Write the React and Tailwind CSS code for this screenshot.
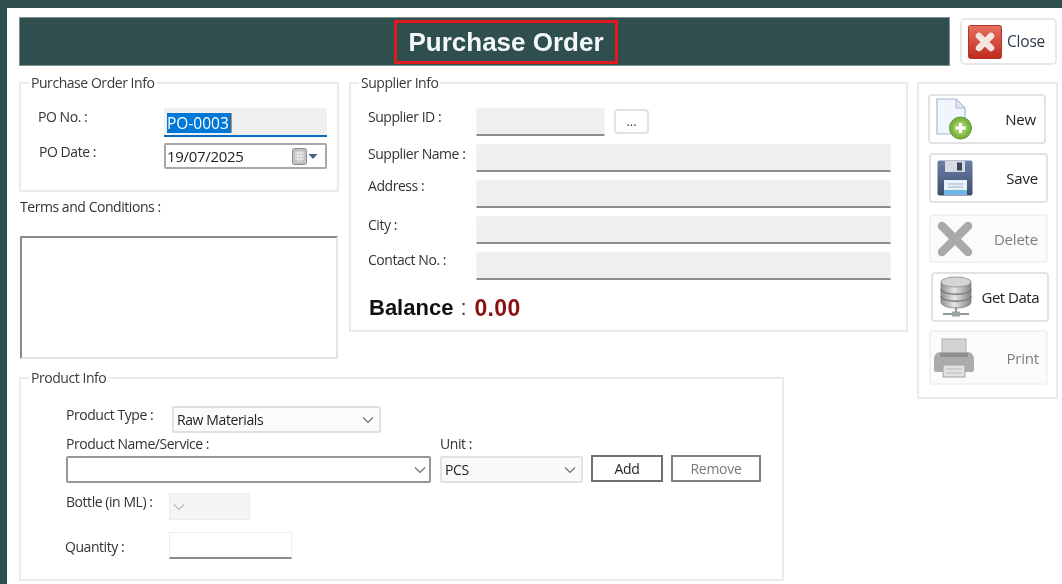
const sans = { fontFamily: '"Open Sans", "Noto Sans", sans-serif' };

function Box({ title, className = "", children }) {
  return (
    <div className={"relative border-2 border-[#ebebeb] " + className}>
      <span className="absolute left-[8px] top-[-11px] bg-white px-[2px] text-[14px] leading-[20px] tracking-[-0.45px] text-[#3a3a3a] whitespace-nowrap">{title}</span>
      {children}
    </div>
  );
}

function Label({ className = "", children }) {
  return <span className={"text-[14px] leading-[20px] tracking-[-0.45px] text-[#333] whitespace-nowrap " + className}>{children}</span>;
}

function Chevron({ className = "", color = "#6a6a6a" }) {
  return (
    <svg viewBox="0 0 12 8" className={"w-[12px] h-[8px] " + className} fill="none" stroke={color} strokeWidth="1.1">
      <path d="M1 1.5 L6 6.5 L11 1.5" />
    </svg>
  );
}

function Field({ className = "" }) {
  return <div className={"h-full bg-[#efefef] border-t border-x border-[#f4f4f4] border-b-2 border-b-[#8c8c8c] rounded-[1px] " + className} />;
}

function SupplierRow({ label, labelClass = "", className = "", children }) {
  return (
    <div className={"flex h-[28px] " + className}>
      <Label className={"w-[108px] shrink-0 " + labelClass}>{label}</Label>
      {children || <Field className="w-[415px]" />}
    </div>
  );
}

function CloseIcon() {
  return (
    <svg viewBox="0 0 34 34" className="w-[34px] h-[34px]">
      <defs>
        <linearGradient id="rd" x1="0" y1="0" x2="0" y2="1">
          <stop offset="0" stopColor="#e8705f" />
          <stop offset="1" stopColor="#bf2a20" />
        </linearGradient>
      </defs>
      <rect x="0.5" y="0.5" width="33" height="33" rx="2" fill="url(#rd)" stroke="#b5342a" />
      <path d="M11 11 L23 23 M23 11 L11 23" stroke="#f6e4e2" strokeWidth="6.5" strokeLinecap="round" />
    </svg>
  );
}

function NewIcon() {
  return (
    <svg viewBox="0 0 36 42" className="w-[36px] h-[42px]">
      <path d="M1 1 H20 L29 10 V36 H1 Z" fill="#f1f5fc" stroke="#a9b6d6" strokeWidth="1.2" />
      <path d="M20 1 V10 H29 Z" fill="#dfe6f4" stroke="#a9b6d6" strokeWidth="1" />
      <circle cx="24.5" cy="30" r="11" fill="#7cb342" stroke="#5f9a30" />
      <circle cx="24.5" cy="30" r="7.5" fill="#94c95a" />
      <path d="M24.5 25 V35 M19.5 30 H29.5" stroke="#ffffff" strokeWidth="3.4" />
    </svg>
  );
}

function SaveIcon() {
  return (
    <svg viewBox="0 0 36 36" className="w-[36px] h-[36px]">
      <defs>
        <linearGradient id="fl" x1="0" y1="0" x2="0" y2="1">
          <stop offset="0" stopColor="#6d7fa6" />
          <stop offset="1" stopColor="#3d4c70" />
        </linearGradient>
      </defs>
      <rect x="0.5" y="0.5" width="35" height="35" rx="2" fill="url(#fl)" />
      <rect x="8" y="1" width="20" height="11" fill="#d8dbe2" />
      <rect x="20" y="2.5" width="5" height="8" fill="#3b4560" />
      <rect x="7" y="20" width="23" height="15" fill="#e8f2fa" />
      <rect x="7" y="30" width="23" height="5" fill="#6fb7e3" />
      <path d="M11 24 H26 M11 27 H26" stroke="#a7b3c6" strokeWidth="1" />
    </svg>
  );
}

function DeleteIcon() {
  return (
    <svg viewBox="0 0 36 36" className="w-[36px] h-[36px]">
      <path d="M5 5 L31 31 M31 5 L5 31" stroke="#a9a9a9" strokeWidth="8.5" strokeLinecap="round" />
    </svg>
  );
}

function DataIcon() {
  return (
    <svg viewBox="0 0 34 42" className="w-[34px] h-[42px]">
      <defs>
        <linearGradient id="db" x1="0" y1="0" x2="1" y2="0">
          <stop offset="0" stopColor="#8f8f8f" />
          <stop offset="0.45" stopColor="#e6e6e6" />
          <stop offset="1" stopColor="#848484" />
        </linearGradient>
      </defs>
      <path d="M2 6 V26 C2 34 32 34 32 26 V6 Z" fill="url(#db)" stroke="#808080" strokeWidth="0.8" />
      <ellipse cx="17" cy="6" rx="15" ry="5" fill="#d5d5d5" stroke="#8a8a8a" strokeWidth="0.8" />
      <path d="M2 13 C2 20 32 20 32 13 M2 20 C2 27 32 27 32 20" fill="none" stroke="#7a7a7a" strokeWidth="1.4" />
      <path d="M17 31 V37 M4 38 H30" stroke="#8d9a9a" strokeWidth="2.2" />
      <rect x="13" y="35.5" width="8" height="5" fill="#9aa5a5" />
    </svg>
  );
}

function PrintIcon() {
  return (
    <svg viewBox="0 0 42 40" className="w-[42px] h-[40px]">
      <rect x="9" y="1" width="24" height="18" fill="#d2d2d2" stroke="#b0b0b0" />
      <path d="M1 22 Q1 14 8 14 H34 Q41 14 41 22 V32 Q41 34 38 34 H4 Q1 34 1 32 Z" fill="#ababab" />
      <rect x="7" y="15" width="28" height="4" fill="#8f8f8f" />
      <rect x="10" y="27" width="22" height="12" fill="#e2e2e2" stroke="#a0a0a0" />
      <path d="M13 31 H29 M13 35 H29" stroke="#bdbdbd" strokeWidth="1" />
    </svg>
  );
}

function ToolButton({ icon, label, className = "", textClass = "", disabled = false }) {
  return (
    <div className={"flex items-center justify-between rounded-[4px] border-2 " + (disabled ? "border-[#f2f2f2] bg-[#fbfbfb] " : "border-[#e2e2e2] bg-white ") + className}>
      {icon}
      <span className={"text-[15px] leading-[20px] tracking-[-0.2px] whitespace-nowrap " + (disabled ? "text-[#7d7d7d] " : "text-[#222] ") + textClass}>{label}</span>
    </div>
  );
}

export default function App() {
  return (
    <div className="w-[1062px] h-[584px] overflow-hidden bg-[#2f4f4f] pt-2 pl-[7px] blur-[0.5px]" style={sans}>
      <div className="h-full bg-white pl-3 pt-[9px]">
        {/* Header */}
        <div className="flex items-start">
          <div className="w-[931px] h-[49px] bg-[#2f4f4f] border border-[#7f9090]">
            <div className="mt-[2px] ml-[374px] h-[44px] w-[224px] border-[3px] border-[#e01b1f] flex items-center justify-center text-[26px] font-bold text-[#f4f8f8]" style={{ fontFamily: '"Liberation Sans", sans-serif' }}>
              Purchase Order
            </div>
          </div>
          <div className="ml-[10px] mt-[1px] w-[97px] h-[47px] rounded-[5px] border-2 border-[#e8e8e8] flex items-center pl-[6px] gap-[5px]">
            <CloseIcon />
            <span className="text-[15.5px] tracking-[-0.2px] text-[#2d3b4a]">Close</span>
          </div>
        </div>

        {/* Body */}
        <div className="flex items-start mt-4">
          <div className="w-[889px] shrink-0">
            <div className="flex items-start gap-[10px]">
              <div className="w-[320px] shrink-0">
                <Box title="Purchase Order Info" className="h-[110px] pt-6 pl-[17px]">
                  <div className="flex h-[29px]">
                    <Label className="w-[126px] shrink-0 mt-[-1px]">PO No. :</Label>
                    <div className="w-[163px] h-full bg-[#f0f0f0] border-b-2 border-b-[#0a6ac0] pl-[3px] pt-[5px]">
                      <span className="block w-[65px] h-[20px] bg-[#0078d7] border-r border-r-[#e8893a] text-[15.5px] leading-[20px] text-white">PO-0003</span>
                    </div>
                  </div>
                  <div className="flex h-[26px] mt-[6px]">
                    <Label className="w-[125px] shrink-0 ml-[1px] mt-[-1px]">PO Date :</Label>
                    <div className="w-[163px] h-full border-2 border-[#a8a8a8] rounded-[2px] flex items-center pl-[1px] pr-[7px]">
                      <span className="text-[15px] tracking-[-0.3px] text-[#222] flex-1">19/07/2025</span>
                      <svg viewBox="0 0 26 17" className="w-[26px] h-[17px]">
                        <rect x="0.5" y="0.5" width="14" height="16" rx="2" fill="#bfc2c7" stroke="#8e8e8e" />
                        <path d="M3 5 H12 M3 8 H12 M3 11 H12 M6 3 V14 M9 3 V14" stroke="#f4f4f4" strokeWidth="1" />
                        <path d="M16.5 6 H25.5 L21 11 Z" fill="#4a6287" />
                      </svg>
                    </div>
                  </div>
                </Box>
                <div className="mt-[5px] h-[20px]">
                  <Label className="block ml-[1px]">Terms and Conditions :</Label>
                </div>
                <div className="mt-[19px] ml-[1px] w-[318px] h-[123px] border-2 border-t-[#8b8b8b] border-l-[#8b8b8b] border-r-[#e4e4e4] border-b-[#e4e4e4] bg-white" />
              </div>

              <Box title="Supplier Info" className="w-[559px] h-[250px] pt-6 pl-[17px]">
                <SupplierRow label="Supplier ID :" labelClass="mt-[-1px]">
                  <Field className="w-[129px]" />
                  <div className="ml-[9px] mt-[1px] w-[35px] h-[25px] rounded-[4px] border-2 border-[#e2e2e2] bg-white text-[13px] leading-[21px] text-center text-[#444]">...</div>
                </SupplierRow>
                <SupplierRow label="Supplier Name :" className="mt-[8px]" />
                <SupplierRow label="Address :" className="mt-[8px]" labelClass="mt-[-4px]" />
                <SupplierRow label="City :" className="mt-[8px]" labelClass="mt-[-1px]" />
                <SupplierRow label="Contact No. :" className="mt-[8px]" labelClass="mt-[-2px]" />
                <div className="mt-[15px] ml-[1px] flex items-center text-[22px] leading-[26px]" style={{ fontFamily: '"Liberation Sans", sans-serif' }}>
                  <span className="font-bold text-[#111]">Balance</span>
                  <span className="ml-[7px] text-[#444]">:</span>
                  <span className="ml-[8px] font-bold text-[#8b1010] text-[23px] tracking-[0.3px]">0.00</span>
                </div>
              </Box>
            </div>

            {/* Product Info */}
            <Box title="Product Info" className="mt-[18px] w-[765px] h-[204px] pl-[45px] pt-[27px]">
              <div className="flex h-[27px]">
                <Label className="w-[106px] shrink-0 mt-[-1px]">Product Type :</Label>
                <div className="w-[209px] h-full bg-[#fbfbfb] border-2 border-[#e0e0e0] rounded-[2px] flex items-center justify-between pl-[3px] pr-[5px]">
                  <span className="text-[14px] tracking-[-0.4px] text-[#222]">Raw Materials</span>
                  <Chevron />
                </div>
              </div>
              <div className="flex h-[20px] mt-[1px]">
                <Label className="w-[374px] shrink-0">Product Name/Service :</Label>
                <Label>Unit :</Label>
              </div>
              <div className="flex items-start mt-[2px] h-[28px]">
                <div className="w-[365px] h-[27px] border-2 border-[#969696] rounded-[2px] flex items-center justify-end pr-[3px]">
                  <Chevron />
                </div>
                <div className="ml-[9px] w-[143px] h-[27px] bg-[#fafafa] border-2 border-[#e2e2e2] rounded-[2px] flex items-center justify-between pl-[3px] pr-[5px]">
                  <span className="text-[14px] tracking-[-0.4px] text-[#222]">PCS</span>
                  <Chevron />
                </div>
                <div className="ml-[8px] mt-[-1px] w-[72px] h-[27px] border-2 border-[#707070] flex items-center justify-center text-[14px] tracking-[-0.4px] text-[#222]">Add</div>
                <div className="ml-[8px] mt-[-1px] w-[90px] h-[27px] border-2 border-[#808080] flex items-center justify-center text-[14px] tracking-[-0.3px] text-[#7a7a7a]">Remove</div>
              </div>
              <div className="flex h-[27px] mt-[9px]">
                <Label className="w-[103px] shrink-0 mt-[-1px]">Bottle (in ML) :</Label>
                <div className="w-[81px] h-full bg-[#f5f5f5] border border-[#ececec] flex items-center pl-[3px]">
                  <Chevron color="#b5b5b5" />
                </div>
              </div>
              <div className="flex h-[27px] mt-[12px]">
                <Label className="w-[103px] shrink-0 ml-[-1px] mr-[1px] mt-[5px]">Quantity :</Label>
                <div className="w-[123px] h-full bg-white border-t border-x border-[#eeeeee] border-b-2 border-b-[#8c8c8c]" />
              </div>
            </Box>
          </div>

          {/* Right toolbar */}
          <div className="ml-[9px] w-[141px] h-[317px] border-2 border-[#ebebeb] pl-[9px] pt-[10px]">
            <ToolButton icon={<NewIcon />} label="New" className="w-[118px] h-[50px] pl-[6px] pr-[8px]" />
            <ToolButton icon={<SaveIcon />} label="Save" className="ml-[1px] mt-[9px] w-[119px] h-[50px] pl-[6px] pr-[8px]" />
            <ToolButton disabled icon={<DeleteIcon />} label="Delete" className="ml-[1px] mt-[11px] w-[119px] h-[49px] pl-[6px] pr-[8px]" />
            <ToolButton icon={<DataIcon />} label="Get Data" className="ml-[3px] mt-[9px] w-[118px] h-[50px] pl-[6px] pr-[8px]" textClass="tracking-[-0.5px]" />
            <ToolButton disabled icon={<PrintIcon />} label="Print" className="ml-[1px] mt-[8px] w-[119px] h-[55px] pl-[2px] pr-[7px]" />
          </div>
        </div>
      </div>
    </div>
  );
}
